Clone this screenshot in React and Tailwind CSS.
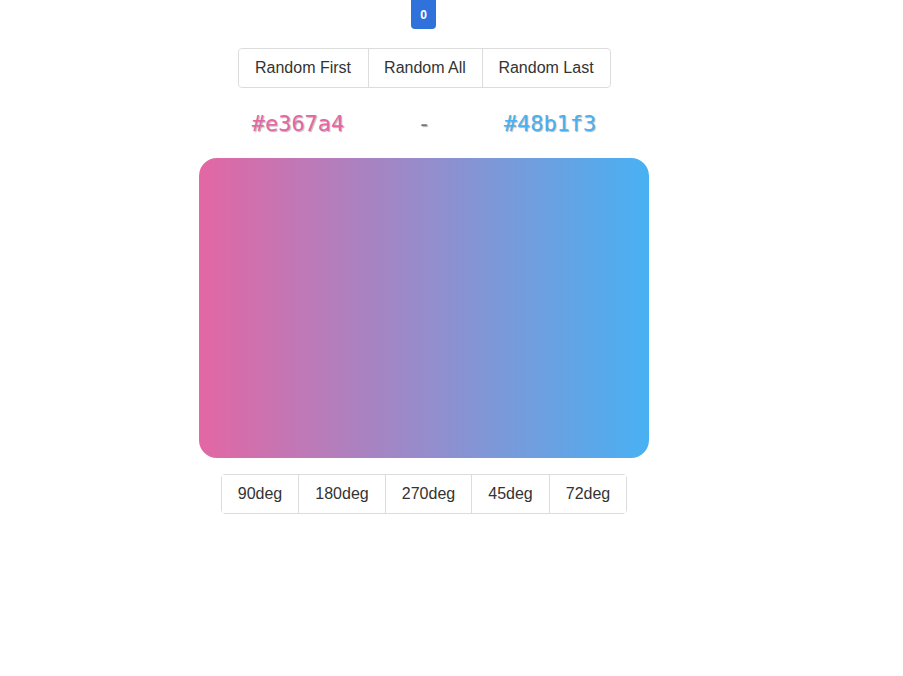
import React, { useState } from 'react';

const randomHex = () =>
  '#' + Math.floor(Math.random() * 0xffffff).toString(16).padStart(6, '0');

const degrees = ['90deg', '180deg', '270deg', '45deg', '72deg'];

const App = () => {
  const [first, setFirst] = useState('#e367a4');
  const [last, setLast] = useState('#48b1f3');
  const [deg, setDeg] = useState('90deg');
  const [count, setCount] = useState(0);

  const bump = () => setCount(c => c + 1);

  return (
    <div className="min-h-[676px] bg-white" style={{ fontFamily: '"Liberation Sans", Arial, sans-serif' }}>
      <div className="w-[848px] flex flex-col items-center">
        {/* counter badge */}
        <div className="-ml-[1px] w-[25px] h-[29px] bg-[#2f72dc] rounded-b-[4px] flex items-center justify-center text-white text-[12px] font-bold">
          {count}
        </div>

        {/* random buttons */}
        <div className="mt-[19px] flex h-[40px] border border-[#dcdcdc] rounded-[4px] text-[16px] text-[#333]">
          <button onClick={() => { setFirst(randomHex()); bump(); }} className="w-[130px] border-r border-[#dcdcdc] bg-white rounded-l-[4px]">Random First</button>
          <button onClick={() => { setFirst(randomHex()); setLast(randomHex()); bump(); }} className="w-[114px] border-r border-[#dcdcdc] bg-white">Random All</button>
          <button onClick={() => { setLast(randomHex()); bump(); }} className="w-[127px] bg-white rounded-r-[4px]">Random Last</button>
        </div>

        {/* hex values */}
        <div
          className="mt-[21px] flex h-[28px] items-center text-[22px] [text-shadow:1px_1px_1px_rgba(0,0,0,0.3)]"
          style={{ fontFamily: '"DejaVu Sans Mono", "Liberation Mono", monospace' }}
        >
          <span className="w-[126px] text-center" style={{ color: first }}>{first}</span>
          <span className="w-[126px] text-center text-[#777]">-</span>
          <span className="w-[126px] text-center" style={{ color: last }}>{last}</span>
        </div>

        {/* gradient preview */}
        <div
          className="mt-[21px] w-[450px] h-[300px] rounded-[18px]"
          style={{ background: `linear-gradient(${deg}, ${first}, ${last})` }}
        />

        {/* angle buttons */}
        <div className="mt-[16px] flex h-[40px] border border-[#dcdcdc] rounded-[4px] text-[16px] text-[#333]">
          {degrees.map((d, i) => (
            <button
              key={d}
              onClick={() => setDeg(d)}
              className={`bg-white ${i < degrees.length - 1 ? 'border-r border-[#dcdcdc]' : ''} ${['w-[77px]', 'w-[87px]', 'w-[86px]', 'w-[78px]', 'w-[76px]'][i]}`}
            >
              {d}
            </button>
          ))}
        </div>
      </div>
    </div>
  );
};

export default App;
